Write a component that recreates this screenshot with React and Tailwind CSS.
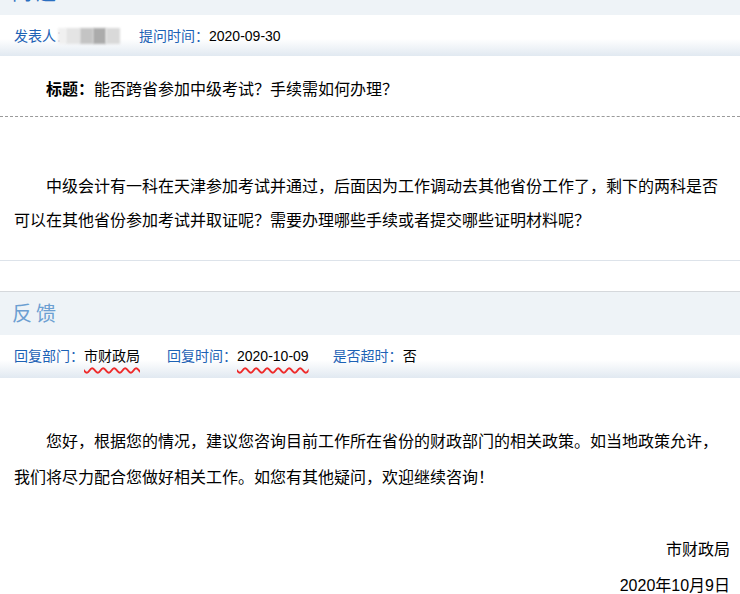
import React from "react";

const font = { fontFamily: '"Liberation Sans", "Noto Sans CJK SC", sans-serif' };

function InfoRow({ children }) {
  return (
    <div className="h-[43px] pt-[11px] px-[14px] flex items-start text-[14px] leading-[20px] bg-[linear-gradient(to_bottom,#ffffff_0%,#ffffff_58%,#e1e9f1_100%)]">
      {children}
    </div>
  );
}

const Label = ({ children }) => <span className="text-[#1d62b5]">{children}</span>;

export default function App() {
  return (
    <div className="w-[740px] h-[594px] overflow-hidden bg-white text-black" style={font}>
      {/* cut-off header */}
      <div className="h-[44px] mt-[-29px] bg-[#eef3f7] flex items-center px-[12px] text-[20px] text-[#2a6fc0] tracking-[4px]">
        问题
      </div>
      <div className="h-[41px] pt-[11px] px-[14px] flex items-start text-[14px] leading-[20px] bg-[linear-gradient(to_bottom,#ffffff_0%,#ffffff_58%,#e1e9f1_100%)]">
        <Label>发表人：</Label>
        <span className="relative flex items-center ml-[-12px] h-[20px] w-[62px]">
          <span className="h-[16px] w-[8px] bg-[#f0f0f0] blur-[1px]" />
          <span className="h-[16px] w-[14px] bg-[#e4e4e4] blur-[1px]" />
          <span className="h-[16px] w-[13px] bg-[#c4c4c4] blur-[1px]" />
          <span className="h-[16px] w-[13px] bg-[#ababab] blur-[1px]" />
          <span className="h-[16px] w-[14px] bg-[#d9d9d9] blur-[1px]" />
        </span>
        <span className="ml-[19px]">
          <Label>提问时间：</Label>
          <span>2020-09-30</span>
        </span>
      </div>

      <div className="pt-[22px] pb-[14px] pl-[46px] text-[16px] leading-[24px] border-b border-dashed border-[#9a9a9a]">
        <span className="font-bold">标题：</span>
        <span>能否跨省参加中级考试？手续需如何办理？</span>
      </div>

      <div className="pt-[53px] pb-[22px] px-[14px] text-[16px] leading-[34px] border-b border-[#dde3ea]">
        <p className="indent-[32px]">
          中级会计有一科在天津参加考试并通过，后面因为工作调动去其他省份工作了，剩下的两科是否可以在其他省份参加考试并取证呢？需要办理哪些手续或者提交哪些证明材料呢？
        </p>
      </div>

      <div className="h-[30px]" />
      <div className="h-[44px] border-t border-[#d5d8dc] bg-[#eef3f7] flex items-center px-[12px] text-[20px] text-[#6c9fd2] tracking-[4px]">
        反馈
      </div>
      <InfoRow>
        <Label>回复部门：</Label>
        <span className="underline decoration-wavy decoration-[#ee2a2a] decoration-[1.5px] underline-offset-[6px]">市财政局</span>
        <span className="ml-[27px]">
          <Label>回复时间：</Label>
          <span className="underline decoration-wavy decoration-[#ee2a2a] decoration-[1.5px] underline-offset-[6px]">2020-10-09</span>
        </span>
        <span className="ml-[24px]">
          <Label>是否超时：</Label>
          <span>否</span>
        </span>
      </InfoRow>

      <div className="pt-[46px] px-[14px] text-[16px] leading-[36px]">
        <p className="indent-[32px]">
          您好，根据您的情况，建议您咨询目前工作所在省份的财政部门的相关政策。如当地政策允许，我们将尽力配合您做好相关工作。如您有其他疑问，欢迎继续咨询！
        </p>
        <div className="h-[36px]" />
        <p className="text-right mr-[-4px]">市财政局</p>
        <p className="text-right mr-[-4px]">2020年10月9日</p>
      </div>
    </div>
  );
}
